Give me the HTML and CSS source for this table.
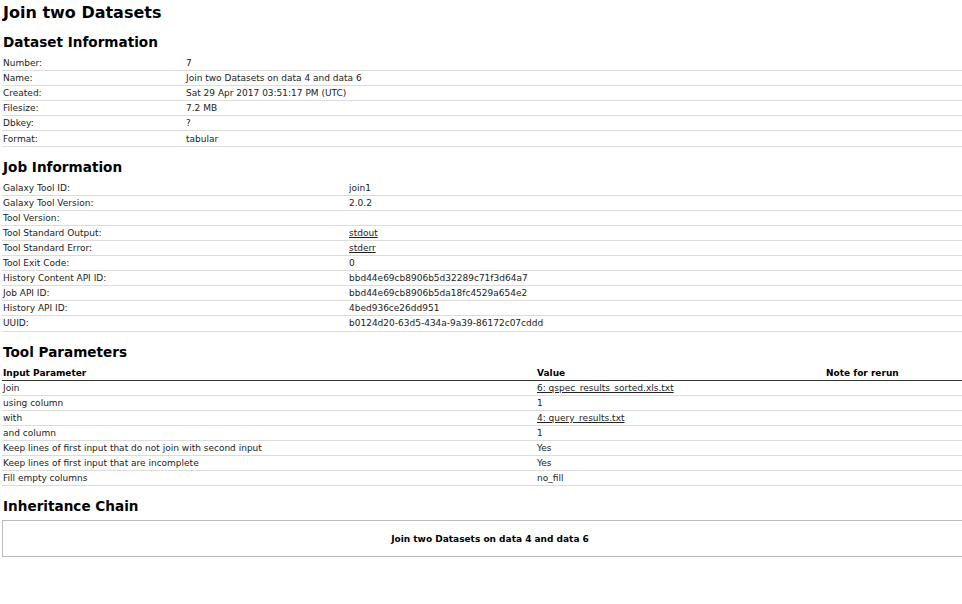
FILE: index.html
```html
<!DOCTYPE html>
<html>
<head>
<meta charset="utf-8">
<title>Join two Datasets</title>
<link rel="stylesheet" href="styles.css">
</head>
<body>
<div class="page">
  <h1 class="title">Join two Datasets</h1>

  <h2 class="section section-dataset">Dataset Information</h2>
  <table class="info info-dataset">
    <tr><td class="label">Number:</td><td>7</td></tr>
    <tr><td class="label">Name:</td><td>Join two Datasets on data 4 and data 6</td></tr>
    <tr><td class="label">Created:</td><td>Sat 29 Apr 2017 03:51:17 PM (UTC)</td></tr>
    <tr><td class="label">Filesize:</td><td>7.2 MB</td></tr>
    <tr><td class="label">Dbkey:</td><td>?</td></tr>
    <tr><td class="label">Format:</td><td>tabular</td></tr>
  </table>

  <h2 class="section section-job">Job Information</h2>
  <table class="info info-job">
    <tr><td class="label">Galaxy Tool ID:</td><td>join1</td></tr>
    <tr><td class="label">Galaxy Tool Version:</td><td>2.0.2</td></tr>
    <tr><td class="label">Tool Version:</td><td></td></tr>
    <tr><td class="label">Tool Standard Output:</td><td><a href="#">stdout</a></td></tr>
    <tr><td class="label">Tool Standard Error:</td><td><a href="#">stderr</a></td></tr>
    <tr><td class="label">Tool Exit Code:</td><td>0</td></tr>
    <tr><td class="label">History Content API ID:</td><td>bbd44e69cb8906b5d32289c71f3d64a7</td></tr>
    <tr><td class="label">Job API ID:</td><td>bbd44e69cb8906b5da18fc4529a654e2</td></tr>
    <tr><td class="label">History API ID:</td><td>4bed936ce26dd951</td></tr>
    <tr><td class="label">UUID:</td><td>b0124d20-63d5-434a-9a39-86172c07cddd</td></tr>
  </table>

  <h2 class="section section-params">Tool Parameters</h2>
  <table class="info info-params">
    <thead>
      <tr><th class="p-name">Input Parameter</th><th class="p-value">Value</th><th class="p-note">Note for rerun</th></tr>
    </thead>
    <tbody>
      <tr><td>Join</td><td><a href="#">6: qspec_results_sorted.xls.txt</a></td><td></td></tr>
      <tr><td>using column</td><td>1</td><td></td></tr>
      <tr><td>with</td><td><a href="#">4: query_results.txt</a></td><td></td></tr>
      <tr><td>and column</td><td>1</td><td></td></tr>
      <tr><td>Keep lines of first input that do not join with second input</td><td>Yes</td><td></td></tr>
      <tr><td>Keep lines of first input that are incomplete</td><td>Yes</td><td></td></tr>
      <tr><td>Fill empty columns</td><td>no_fill</td><td></td></tr>
    </tbody>
  </table>

  <h2 class="section section-chain">Inheritance Chain</h2>
  <div class="chain">
    <div class="chain-item">Join two Datasets on data 4 and data 6</div>
  </div>
</div>
</body>
</html>
```

FILE: styles.css
```css
html, body {
  margin: 0;
  padding: 0;
  background: #fff;
  overflow-x: hidden;
}
body {
  font-family: "DejaVu Sans", Verdana, sans-serif;
  font-size: 9px;
  color: #222;
}
.page {
  width: 976px;
  padding: 0 0 0 2px;
}
.title {
  font-size: 16px;
  font-weight: bold;
  line-height: 20px;
  margin: 3px 0 0 1px;
  color: #000;
}
.section {
  font-size: 13.6px;
  font-weight: bold;
  line-height: 20px;
  margin: 9px 0 4px 1px;
  color: #000;
}
.section-job { margin-top: 10px; }
.section-params { margin-top: 10px; margin-bottom: 4px; }
.section-chain { margin-top: 10px; }
.info {
  width: 100%;
  border-collapse: collapse;
}
.info td, .info th {
  padding: 0 1px;
  height: 14.1px;
  line-height: 14px;
  border-bottom: 1px solid #dcdcdc;
  text-align: left;
  vertical-align: middle;
  white-space: nowrap;
}
.info th {
  font-weight: bold;
  color: #000;
  border-bottom: 1px solid #333;
}
.info-dataset .label { width: 181px; }
.info-job .label { width: 344px; }
.p-name { width: 532px; }
.p-value { width: 287px; }
a { color: #222; text-decoration: underline; }
.chain {
  margin-top: 4px;
  border: 1px solid #bbb;
  height: 35px;
  display: flex;
  align-items: center;
  justify-content: center;
}
.chain-item {
  font-weight: bold;
  color: #000;
}
```
